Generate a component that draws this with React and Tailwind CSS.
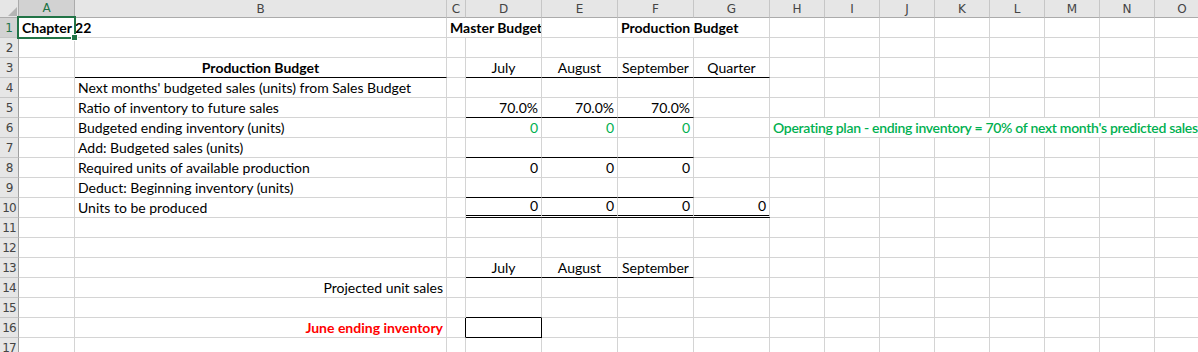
import React from 'react';

const COLS = ['A', 'B', 'C', 'D', 'E', 'F', 'G', 'H', 'I', 'J', 'K', 'L', 'M', 'N', 'O'];

const GREEN = 'text-[#00b050]';
const LINE = 'border-b-black';
const DOUBLE = 'border-b-[3px] border-b-black border-double';

// each row: list of cells { c: start column index, span class, text, cls }
const rows = [
  [
    { c: 0, n: 2, span: 'col-span-2', t: 'Chapter 22', cls: 'font-bold' },
    { c: 2, n: 2, span: 'col-span-2', t: 'Master Budget', cls: 'font-bold' },
    { c: 5, n: 2, span: 'col-span-2', t: 'Production Budget', cls: 'font-bold' },
  ],
  [],
  [
    { c: 1, t: 'Production Budget', cls: `font-bold justify-center ${LINE}` },
    { c: 3, t: 'July', cls: `justify-center ${LINE}` },
    { c: 4, t: 'August', cls: `justify-center ${LINE}` },
    { c: 5, t: 'September', cls: `justify-center ${LINE}` },
    { c: 6, t: 'Quarter', cls: `justify-center ${LINE}` },
  ],
  [{ c: 1, t: "Next months' budgeted sales (units) from Sales Budget" }],
  [
    { c: 1, t: 'Ratio of inventory to future sales' },
    { c: 3, t: '70.0%', cls: `justify-end ${LINE}` },
    { c: 4, t: '70.0%', cls: `justify-end ${LINE}` },
    { c: 5, t: '70.0%', cls: `justify-end ${LINE}` },
  ],
  [
    { c: 1, t: 'Budgeted ending inventory (units)' },
    { c: 3, t: '0', cls: `justify-end ${GREEN}` },
    { c: 4, t: '0', cls: `justify-end ${GREEN}` },
    { c: 5, t: '0', cls: `justify-end ${GREEN}` },
    { c: 7, n: 8, span: 'col-span-8', t: "Operating plan - ending inventory = 70% of next month's predicted sales", cls: `font-semibold tracking-[-0.3px] ${GREEN}` },
  ],
  [
    { c: 1, t: 'Add: Budgeted sales (units)' },
    { c: 3, t: '', cls: LINE },
    { c: 4, t: '', cls: LINE },
    { c: 5, t: '', cls: LINE },
  ],
  [
    { c: 1, t: 'Required units of available production' },
    { c: 3, t: '0', cls: 'justify-end' },
    { c: 4, t: '0', cls: 'justify-end' },
    { c: 5, t: '0', cls: 'justify-end' },
  ],
  [
    { c: 1, t: 'Deduct: Beginning inventory (units)' },
    { c: 3, t: '', cls: LINE },
    { c: 4, t: '', cls: LINE },
    { c: 5, t: '', cls: LINE },
  ],
  [
    { c: 1, t: 'Units to be produced' },
    { c: 3, t: '0', cls: `justify-end ${DOUBLE}` },
    { c: 4, t: '0', cls: `justify-end ${DOUBLE}` },
    { c: 5, t: '0', cls: `justify-end ${DOUBLE}` },
    { c: 6, t: '0', cls: `justify-end ${DOUBLE}` },
  ],
  [],
  [],
  [
    { c: 3, t: 'July', cls: `justify-center ${LINE}` },
    { c: 4, t: 'August', cls: `justify-center ${LINE}` },
    { c: 5, t: 'September', cls: `justify-center ${LINE}` },
  ],
  [{ c: 1, t: 'Projected unit sales', cls: 'justify-end' }],
  [{ c: 3, t: '', cls: LINE }],
  [
    { c: 1, t: 'June ending inventory', cls: 'justify-end font-bold text-[#ff0000]' },
    { c: 2, t: '', cls: 'border-r-black' },
    { c: 3, t: '', cls: `${LINE} border-r-black` },
  ],
  [],
];

function fillRow(cells) {
  const out = [];
  let i = 0;
  while (i < COLS.length) {
    const cell = cells.find((x) => x.c === i);
    if (cell) {
      out.push(cell);
      i += cell.n || 1;
    } else {
      out.push({ c: i, t: '' });
      i += 1;
    }
  }
  return out;
}

export default function App() {
  return (
    <div className="relative w-[1198px] h-[352px] overflow-hidden bg-white text-black" style={{ fontFamily: 'Lato, "Open Sans", sans-serif' }}>
      <div className="grid grid-cols-[19px_56px_372px_19px_76px_76px_76px_76px_55px_55px_55px_55px_55px_55px_55px_55px] grid-rows-[18px_repeat(17,20px)] w-[1210px]">
        {/* corner */}
        <div className="relative bg-[#e6e6e6] border-r border-b border-[#ababab]">
          <svg className="absolute right-[1px] bottom-[1px]" width="9" height="9" viewBox="0 0 9 9">
            <path d="M9 0 L9 9 L0 9 Z" fill="#b4b4b4" />
          </svg>
        </div>
        {COLS.map((c, i) => (
          <div
            key={c}
            className={
              i === 0
                ? 'flex items-center justify-center bg-[#d2d2d2] border-r border-r-[#ababab] border-b-2 border-b-[#217346] text-[#217346] text-[12px]'
                : 'flex items-center justify-center bg-[#e6e6e6] border-r border-b border-r-[#c6c6c6] border-b-[#ababab] text-[#444] text-[12px]'
            }
            style={{ fontFamily: '"DejaVu Sans", sans-serif' }}
          >
            {c}
          </div>
        ))}
        {rows.map((cells, r) => (
          <React.Fragment key={r}>
            <div
              className={
                r === 0
                  ? 'flex items-center justify-center bg-[#d2d2d2] border-r-2 border-r-[#217346] border-b border-b-[#c6c6c6] text-[#217346] text-[12px]'
                  : 'flex items-center justify-center bg-[#e6e6e6] border-r border-b border-r-[#9f9f9f] border-b-[#c6c6c6] text-[#444] text-[12px]'
              }
              style={{ fontFamily: '"DejaVu Sans", sans-serif', letterSpacing: '-1px' }}
            >
              {r + 1}
            </div>
            {fillRow(cells).map((cell) => (
              <div
                key={cell.c}
                className={`flex items-end px-[3px] whitespace-nowrap overflow-hidden border-r border-b border-[#d4d4d4] text-[14px] leading-[19px] ${cell.span || ''} ${cell.cls || ''}`}
              >
                {cell.t}
              </div>
            ))}
          </React.Fragment>
        ))}
      </div>
      {/* active cell A1 */}
      <div className="absolute left-[17px] top-[16px] w-[59px] h-[23px] border-2 border-[#217346] pointer-events-none" />
      <div className="absolute left-[71px] top-[34px] w-[7px] h-[7px] bg-[#217346] border border-white" />
    </div>
  );
}
